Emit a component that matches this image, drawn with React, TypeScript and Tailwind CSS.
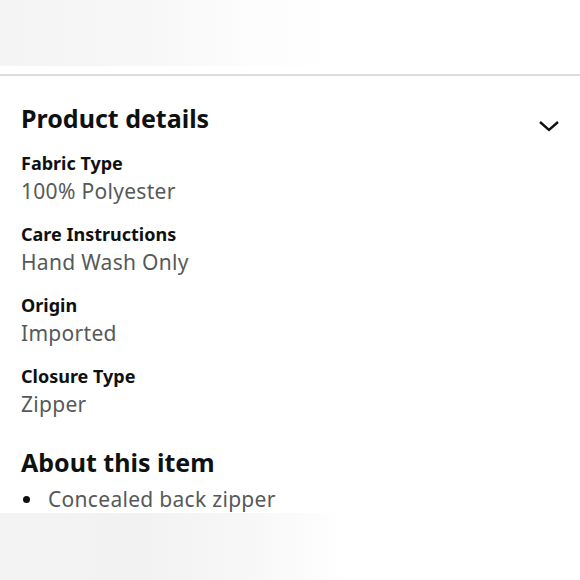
import React from "react";

const rows = [
  { label: "Fabric Type", value: "100% Polyester" },
  { label: "Care Instructions", value: "Hand Wash Only" },
  { label: "Origin", value: "Imported" },
  { label: "Closure Type", value: "Zipper" },
];

export default function App() {
  return (
    <div
      className="w-[580px] h-[580px] bg-white overflow-hidden flex flex-col"
      style={{ fontFamily: '"Noto Sans", "Open Sans", sans-serif' }}
    >
      <div className="h-[66px] w-full bg-[linear-gradient(90deg,#f4f4f4_0%,#f7f7f7_25%,#fdfdfd_45%,#ffffff_60%)]" />
      <div className="h-[8px]" />
      <div className="h-[2px] w-full bg-[#dcdcdc]" />
      <div className="px-[21px] pt-[26px] flex flex-col">
        <div className="flex items-center justify-between h-[32px]">
          <h2 className="text-[25px] font-bold text-[#0f1111] leading-[32px]">Product details</h2>
          <svg width="22" height="14" viewBox="0 0 22 14" className="mr-[-1px] mt-[16px]">
            <path d="M2 3 L11 11 L20 3" fill="none" stroke="#0f1111" strokeWidth="2.4" />
          </svg>
        </div>
        <div className="flex flex-col mt-[15px] gap-[15px]">
          {rows.map((r) => (
            <div key={r.label} className="flex flex-col">
              <div className="text-[18px] font-bold text-[#0f1111] leading-[28px]">{r.label}</div>
              <div className="text-[21px] tracking-[0.3px] text-[#565959] leading-[28px]">{r.value}</div>
            </div>
          ))}
        </div>
        <h2 className="text-[25px] font-bold text-[#0f1111] leading-[32px] mt-[28px]">About this item</h2>
        <div className="flex items-center mt-[7px] h-[28px]">
          <span className="w-[7px] h-[7px] rounded-full bg-[#0f1111] ml-[2px] mr-[18px]" />
          <span className="text-[21px] tracking-[0.3px] text-[#565959] leading-[28px]">Concealed back zipper</span>
        </div>
      </div>
      <div className="mt-auto h-[67px] w-full bg-[linear-gradient(90deg,#f3f3f3_0%,#f2f2f2_25%,#f8f8f8_45%,#ffffff_60%)]" />
    </div>
  );
}
